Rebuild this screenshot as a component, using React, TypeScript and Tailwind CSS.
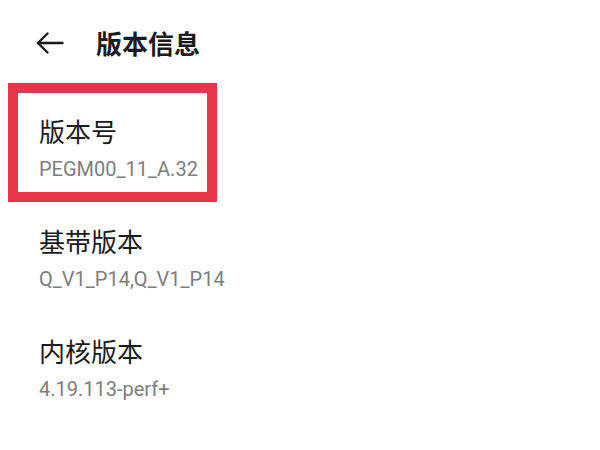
import React from "react";

const items = [
  { title: "版本号", value: "PEGM00_11_A.32", highlight: true },
  { title: "基带版本", value: "Q_V1_P14,Q_V1_P14", highlight: false },
  { title: "内核版本", value: "4.19.113-perf+", highlight: false },
];

export default function App() {
  return (
    <div
      className="w-[600px] h-[450px] bg-white overflow-hidden"
      style={{ fontFamily: '"Roboto", "Noto Sans CJK SC", sans-serif' }}
    >
      <div className="h-[86px] flex items-center">
        <svg
          width="28"
          height="22"
          viewBox="0 0 28 22"
          className="ml-[36px]"
          fill="none"
          stroke="#1b1b1b"
          strokeWidth="2.4"
          strokeLinecap="round"
          strokeLinejoin="round"
        >
          <path d="M2 11 H26.5" />
          <path d="M11.5 1.5 L2 11 L11.5 20.5" />
        </svg>
        <div
          className="ml-[32px] text-[26px] leading-[30px] font-bold text-[#1b1b1b]"
          style={{ fontFamily: '"Noto Sans CJK SC", sans-serif' }}
        >
          版本信息
        </div>
      </div>
      <div className="flex flex-col">
        {items.map((it) => (
          <div key={it.title} className="relative h-[110px] pl-[39px] pt-[30px]">
            {it.highlight && (
              <div className="absolute left-[8px] top-[-3px] w-[209px] h-[119px] border-[10px] border-[#e8354a]" />
            )}
            <div
              className="text-[26px] leading-[30px] text-[#1b1b1b]"
              style={{ fontFamily: '"Noto Sans CJK SC", sans-serif' }}
            >
              {it.title}
            </div>
            <div className="mt-[11px] text-[20px] leading-[24px] text-[#7d7d7d]">
              {it.value}
            </div>
          </div>
        ))}
      </div>
    </div>
  );
}
